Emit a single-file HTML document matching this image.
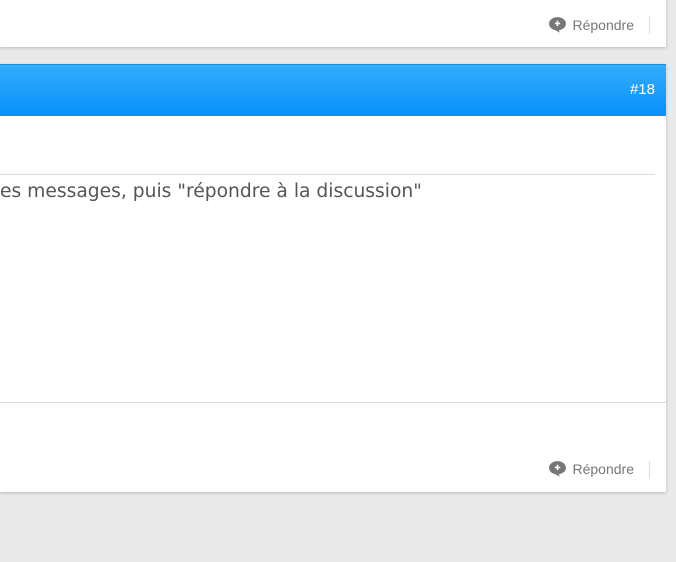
<!DOCTYPE html><html><head><style>
body{margin:0;width:676px;height:562px;background:#e9e9e9;position:relative;overflow:hidden;font-family:"Liberation Sans",sans-serif}
.card{position:absolute;left:0;width:666px;background:#fff;box-shadow:0 1px 3px rgba(0,0,0,.2)}
.rep{position:absolute;right:32px;font-size:14px;color:#777;display:flex;align-items:center}
.rep svg{margin-right:6px}
.sep{position:absolute;right:16px;width:1px;height:18px;background:#ddd}
</style></head><body>
<div class="card" style="top:0;height:47px">
<div class="rep" style="top:16px"><svg width="19" height="17" viewBox="0 0 18 16"><path d="M9 1C4.5 1 1 3.8 1 7.3c0 3 2.5 5.5 6 6.1l4 2.3-.6-2.3C14.5 12.7 17 10.2 17 7.3 17 3.8 13.5 1 9 1z" fill="#777"/><path d="M9 4.5v5M6.5 7h5" stroke="#fff" stroke-width="1.5"/></svg>Répondre</div>
<div class="sep" style="top:16px"></div>
</div>
<div class="card" style="top:64px;height:428px">
<div style="height:52px;background:linear-gradient(#33adfb,#0890fb);border-top:1px solid #1a8ee0;box-sizing:border-box;color:#fff;font-size:15px;text-align:right;padding:16px 11px 0 0">#18</div>
<div style="position:absolute;top:110px;left:0;width:655px;height:1px;background:#ddd"></div>
<div style="position:absolute;top:117px;left:0;font-family:'DejaVu Sans',sans-serif;font-size:18.7px;color:#555;white-space:nowrap">es messages, puis "répondre à la discussion"</div>
<div style="position:absolute;top:338px;left:0;width:666px;height:1px;background:#ddd"></div>
<div class="rep" style="top:396px"><svg width="19" height="17" viewBox="0 0 18 16"><path d="M9 1C4.5 1 1 3.8 1 7.3c0 3 2.5 5.5 6 6.1l4 2.3-.6-2.3C14.5 12.7 17 10.2 17 7.3 17 3.8 13.5 1 9 1z" fill="#777"/><path d="M9 4.5v5M6.5 7h5" stroke="#fff" stroke-width="1.5"/></svg>Répondre</div>
<div class="sep" style="top:397px"></div>
</div>
</body></html>
